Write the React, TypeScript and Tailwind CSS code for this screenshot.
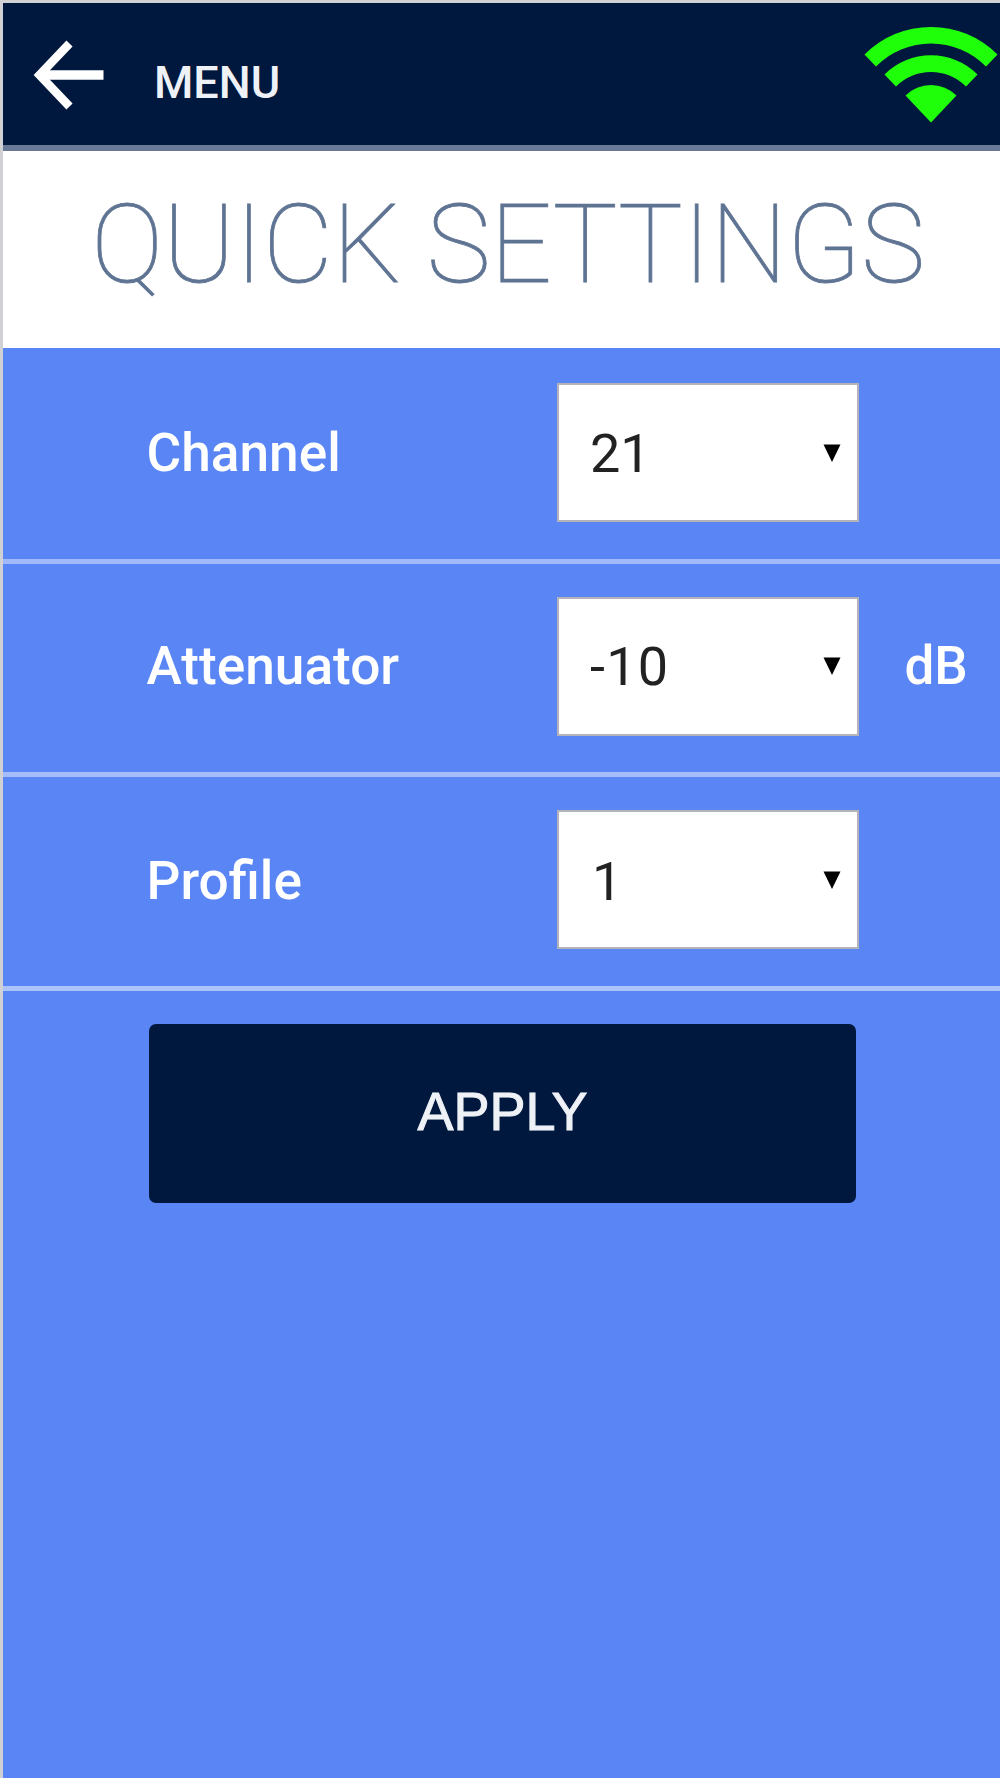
import React, { useState } from "react";

type settingProps = {
	label: string;
	options: string[];
	unit?: string;
	lineColor: string;
	labelClass: string;
	textClass: string;
};

const settings: settingProps[] = [
	{
		label: "Channel",
		options: ["21", "22", "23"],
		lineColor: "border-[#a2bafa]",
		labelClass: "pt-[72px]",
		textClass: "pt-[2px]",
	},
	{
		label: "Attenuator",
		options: ["-10", "-20", "-30"],
		unit: "dB",
		lineColor: "border-[#a5bdfb]",
		labelClass: "pt-[71px]",
		textClass: "pt-[1px] tracking-[1.3px]",
	},
	{
		label: "Profile",
		options: ["1", "2", "3"],
		lineColor: "border-[#adc3fb]",
		labelClass: "pt-[73px]",
		textClass: "pt-[4px] indent-[2px]",
	},
];

const BackIcon = () => (
	<svg className="w-[72px] h-[72px]" viewBox="0 0 72 72" fill="none" stroke="#fff">
		<path d="M70.5 36H6" strokeWidth="9.5" />
		<path d="M36.5 4.5L6.5 36L36.5 67.5" strokeWidth="8.5" />
	</svg>
);

const WifiIcon = () => (
	<svg className="w-[134px] h-[97px]" viewBox="0 0 134 97" fill="#20ff0a">
		<path d="M0.5 28.5A94 94 0 0 1 133.5 28.5L122 40.5A77 77 0 0 0 12 40.5Z" />
		<path d="M20.5 48.5A66 66 0 0 1 113.5 48.5L102 60.5A49.5 49.5 0 0 0 32 60.5Z" />
		<path d="M41.5 69.5A36.5 36.5 0 0 1 92.5 69.5L67 96.5Z" />
	</svg>
);

const SettingRow: React.FC<settingProps> = ({ label, options, unit, lineColor, labelClass, textClass }) => {
	const [value, setValue] = useState(options[0]);

	return (
		<div className={`h-[213.5px] pl-[143.5px] flex items-start border-b-[5px] ${lineColor}`}>
			<label className={`w-[410.5px] text-[53.2px] leading-[62px] font-medium text-white ${labelClass}`}>{label}</label>
			<div className="mt-[33px] w-[302px] h-[139px] grid items-center bg-white border-[2px] border-[#b4b4b8]">
				<select
					value={value}
					onChange={(event) => setValue(event.target.value)}
					className={`col-start-1 row-start-1 w-full h-full pl-[31px] appearance-none outline-none text-[54px] text-[#222] ${textClass}`}
				>
					{options.map((option) => (
						<option key={option}>{option}</option>
					))}
				</select>
				<svg
					className="col-start-1 row-start-1 justify-self-end mr-[16.5px] w-[18px] h-[18px] pointer-events-none"
					viewBox="0 0 18 18"
				>
					<path d="M0.5 0.5H17.5L9 18Z" />
				</svg>
			</div>
			{unit ? (
				<span className={`ml-[45.5px] text-[53px] leading-[62px] font-medium text-white ${labelClass}`}>{unit}</span>
			) : null}
		</div>
	);
};

const App: React.FC = () => {
	return (
		<div className="w-[1000px] h-[1778px] overflow-hidden flex flex-col bg-[#5a86f5] border-t-[3px] border-l-[3px] border-[#d0d1d5] font-['Roboto',sans-serif]">
			<header className="h-[148px] shrink-0 flex items-start bg-[#00183d] border-b-[6px] border-[#687a97]">
				<button className="ml-[30px] mt-[36px]">
					<BackIcon />
				</button>
				<span className="ml-[49px] mt-[53px] text-[45px] leading-[54px] font-medium text-[#eef1f6]">MENU</span>
				<div className="ml-auto mr-[2px] mt-[23px]">
					<WifiIcon />
				</div>
			</header>

			<div className="h-[197px] shrink-0 bg-white pt-[29px] pl-[88px]">
				<h1 className="text-[108.5px] leading-[129px] tracking-[-0.4px] font-thin text-[#5f7493] [-webkit-text-stroke:0.8px_#5f7493] whitespace-nowrap">
					QUICK SETTINGS
				</h1>
			</div>

			<div className="pt-[2px]">
				{settings.map((setting) => (
					<SettingRow key={setting.label} {...setting} />
				))}
			</div>

			<button className="mt-[33px] ml-[146px] w-[707px] h-[179px] pb-[4px] rounded-[7px] bg-[#00183d] font-['Liberation_Sans',Arial,sans-serif] text-[54px] text-[#eef1f6] [-webkit-text-stroke:1px_#eef1f6]">
				APPLY
			</button>
		</div>
	);
};

export default App;
